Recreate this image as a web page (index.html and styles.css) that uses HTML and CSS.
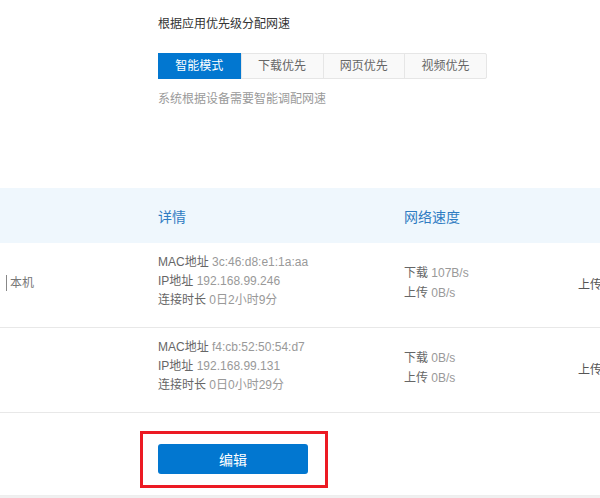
FILE: index.html
```html
<!DOCTYPE html>
<html lang="zh-CN">
<head>
    <meta charset="UTF-8">
    <title>网速分配</title>
    <link rel="stylesheet" href="styles.css">
</head>
<body>
    <div class="qos">
        <p class="qos-title">根据应用优先级分配网速</p>
        <div class="tabs">
            <span class="tab active">智能模式</span>
            <span class="tab">下载优先</span>
            <span class="tab">网页优先</span>
            <span class="tab">视频优先</span>
        </div>
        <p class="qos-hint">系统根据设备需要智能调配网速</p>
    </div>

    <div class="device-table">
        <div class="row head">
            <div class="cell"></div>
            <div class="cell">详情</div>
            <div class="cell">网络速度</div>
            <div class="cell"></div>
        </div>

        <div class="row">
            <div class="cell name"><span class="tag">本机</span></div>
            <div class="cell detail">
                <div>MAC地址 <span class="val">3c:46:d8:e1:1a:aa</span></div>
                <div>IP地址 <span class="val">192.168.99.246</span></div>
                <div>连接时长 <span class="val">0日2小时9分</span></div>
            </div>
            <div class="cell speed">
                <div>下载 <span class="val">107B/s</span></div>
                <div>上传 <span class="val">0B/s</span></div>
            </div>
            <div class="cell limit">上传</div>
        </div>

        <div class="row">
            <div class="cell name"></div>
            <div class="cell detail">
                <div>MAC地址 <span class="val">f4:cb:52:50:54:d7</span></div>
                <div>IP地址 <span class="val">192.168.99.131</span></div>
                <div>连接时长 <span class="val">0日0小时29分</span></div>
            </div>
            <div class="cell speed">
                <div>下载 <span class="val">0B/s</span></div>
                <div>上传 <span class="val">0B/s</span></div>
            </div>
            <div class="cell limit">上传</div>
        </div>
    </div>

    <div class="footer">
        <div class="mark">
            <button class="btn-edit">编辑</button>
        </div>
    </div>
</body>
</html>
```

FILE: styles.css
```css
* {
    font-family: "Liberation Sans", "Noto Sans CJK SC", sans-serif;
    box-sizing: border-box;
}

body {
    margin: 0;
    background: #fff;
    font-size: 12px;
    color: #666;
    overflow: hidden;
    height: 498px;
}

.qos {
    padding: 15px 0 0 158px;
}

.qos-title {
    margin: 0;
    line-height: 18px;
    color: #333;
}

.tabs {
    display: flex;
    margin-top: 20px;
    width: 329px;
    border: 1px solid #e6e6e6;
    border-radius: 2px;
    background: #f9f9f9;
}

.tab {
    width: 82px;
    height: 24px;
    line-height: 24px;
    text-align: center;
    color: #666;
    border-left: 1px solid #e6e6e6;
}

.tab:first-child {
    border-left: none;
}

.tab.active {
    background: #0277d0;
    color: #fff;
    margin: -1px 0 -1px -1px;
    height: 26px;
    line-height: 26px;
    width: 83px;
}

.qos-hint {
    margin: 11px 0 0;
    line-height: 18px;
    color: #9a9a9a;
}

.device-table {
    margin-top: 80px;
}

.row {
    display: grid;
    grid-template-columns: 158px 246px 174px 1fr;
    border-bottom: 1px solid #e8e8e8;
    white-space: nowrap;
}

.row.head {
    height: 55px;
    background: #eff7fd;
    border-bottom: none;
    align-items: center;
    font-size: 14px;
    color: #2f7cc2;
}

.cell {
    align-self: center;
}

.detail {
    padding: 10px 0 17px;
    line-height: 19px;
}

.speed {
    line-height: 20px;
    padding-bottom: 4px;
}

.name,
.limit {
    padding-bottom: 4px;
}

.tag {
    display: inline-block;
    margin-left: 6px;
    padding-left: 3px;
    line-height: 16px;
    border-left: 1px solid #888;
    color: #777;
}

.val {
    color: #999;
}

.limit {
    color: #555;
}

.footer {
    height: 83px;
    border-bottom: 1px solid #eee;
    padding: 18px 0 0 140px;
}

/* 강조 표시용 빨간 박스 */
.mark {
    width: 188px;
    height: 57px;
    border: 3px solid #ec1a23;
    padding: 10px 0 0 15px;
}

.btn-edit {
    display: block;
    width: 150px;
    height: 30px;
    border: none;
    border-radius: 3px;
    background: #0277d0;
    color: #fff;
    font-size: 14px;
    cursor: pointer;
}

body::after {
    content: "";
    display: block;
    height: 4px;
    background: #f0f0f0;
}
```
